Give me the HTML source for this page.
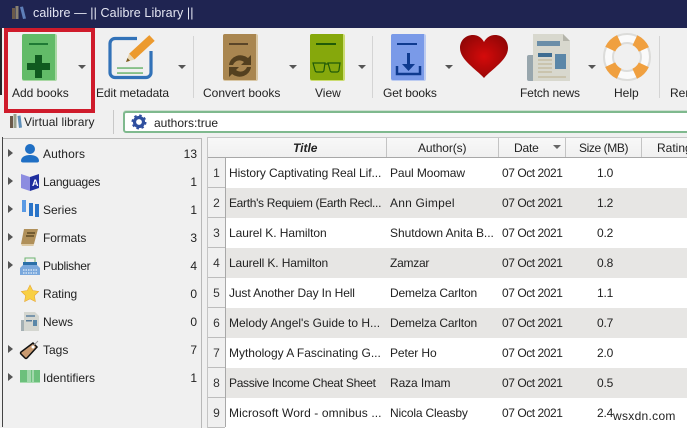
<!DOCTYPE html>
<html>
<head>
<meta charset="utf-8">
<style>
html,body{margin:0;padding:0}
body{width:687px;height:427px;overflow:hidden;position:relative;background:#f0f0f0;font-family:"Liberation Sans",sans-serif;font-size:12px;color:#222}
.a{position:absolute;white-space:nowrap}
.t{position:absolute;white-space:nowrap;line-height:16px}
.d{position:absolute;left:502px;white-space:nowrap;line-height:16px;letter-spacing:-.45px}
.s{position:absolute;left:597px;white-space:nowrap;line-height:16px;letter-spacing:-.2px}
.u{position:absolute;left:229px;white-space:nowrap;line-height:16px;letter-spacing:-.12px}
.w{position:absolute;left:390px;white-space:nowrap;line-height:16px;letter-spacing:-.1px}
.r{position:absolute;left:226px;width:461px;height:30px}
.n{position:absolute;left:208px;width:17px;height:29px;background:#f0f0f0;border-bottom:1px solid #bdbdbd;text-align:center;line-height:30px;color:#333}
.caret{position:absolute;width:0;height:0;border-left:4px solid transparent;border-right:4px solid transparent;border-top:4px solid #555}
.tri{position:absolute;left:8px;width:0;height:0;border-top:4px solid transparent;border-bottom:4px solid transparent;border-left:5px solid #555}
.sep{position:absolute;width:1px;background:#d4d4d4;top:36px;height:62px}
svg{position:absolute;overflow:visible}
</style>
</head>
<body>
<div class="a" style="left:0;top:0;width:687px;height:28px;background:#1f2451"></div>
<svg style="left:12px;top:5px" width="16" height="16" viewBox="0 0 16 16"><rect x="0" y="3" width="3" height="11" fill="#6b5a4a"/><rect x="3.500" y="1" width="3" height="13" fill="#8a8272"/><path d="M8 2l3-.5 3 12-3 .5z" fill="#5f7fb8"/></svg>
<div class="t" style="left:33px;top:5px;color:#e4e6f2;font-size:12.500px;letter-spacing:.1px">calibre — || Calibre Library ||</div>

<div class="a" style="left:0;top:28px;width:2px;height:67px;background:#26262a"></div>
<div class="a" style="left:2px;top:137px;width:1px;height:290px;background:#444"></div>

<svg style="left:22px;top:34px" width="36" height="48" viewBox="0 0 36 48"><rect x="0" y="0" width="35" height="47" rx="2" fill="#a9d8a4"/><path d="M0 2a2 2 0 012-2h31v46H2a2 2 0 01-2-2z" fill="#62bb68"/><rect x="7" y="9" width="19" height="2" fill="#1f7a35"/><path d="M13 21h7v8h8v7h-8v8h-7v-8H5v-7h8z" fill="#0f5a1f"/></svg>
<div class="a" style="left:4px;top:28px;width:83px;height:77px;border:4px solid #cf1b2b"></div>
<div class="caret" style="left:78px;top:65px"></div>
<div class="t" style="left:12px;top:85px">Add books</div>

<svg style="left:108px;top:34px" width="50" height="48" viewBox="0 0 50 48"><path d="M29 4.500H7a5 5 0 00-5 5v29a5 5 0 005 5h31a5 5 0 005-5V17" fill="none" stroke="#3272b8" stroke-width="3.200"/><path d="M21.100 19.700L41.300 1.100l5.400 5.800-20.200 18.600z" fill="#ec9a2e"/><path d="M21.100 19.700L18 28l8.500-2.500z" fill="#e8d5b0"/><path d="M19.500 24L18 28l4-1.200z" fill="#7a5a20"/><rect x="9" y="33.300" width="26" height="1.500" fill="#6db46f"/><rect x="9" y="38.300" width="26" height="1.500" fill="#6db46f"/></svg>
<div class="caret" style="left:178px;top:65px"></div>
<div class="t" style="left:96px;top:85px;letter-spacing:-.08px">Edit metadata</div>
<div class="sep" style="left:193px"></div>

<svg style="left:223px;top:34px" width="36" height="48" viewBox="0 0 36 48"><rect x="0" y="0" width="35" height="47" rx="2" fill="#d8c6a4"/><path d="M0 2a2 2 0 012-2h31v46H2a2 2 0 01-2-2z" fill="#a98650"/><rect x="6" y="9" width="19" height="2" fill="#5a4528"/><path d="M6 31a11.500 11 0 0119-7l3-3v10h-10l3-3a7 7 0 00-11 3zM28 33a11.500 11 0 01-19 7l-3 3V33h10l-3 3a7 7 0 0011-3z" fill="#54401f"/></svg>
<div class="caret" style="left:289px;top:65px"></div>
<div class="t" style="left:203px;top:85px">Convert books</div>

<svg style="left:310px;top:34px" width="36" height="48" viewBox="0 0 36 48"><rect x="0" y="0" width="35" height="47" rx="2" fill="#cbdc70"/><path d="M0 2a2 2 0 012-2h31v46H2a2 2 0 01-2-2z" fill="#86a80c"/><rect x="6" y="9" width="20" height="2" fill="#205a08"/><path d="M3 29h12l-1 7a2 2 0 01-2 2H7a2 2 0 01-2-2zM18 29h12l-1 7a2 2 0 01-2 2h-5a2 2 0 01-2-2zM15 30h3" fill="none" stroke="#205a08" stroke-width="1.200"/></svg>
<div class="caret" style="left:358px;top:65px"></div>
<div class="t" style="left:315px;top:85px">View</div>
<div class="sep" style="left:372px"></div>

<svg style="left:391px;top:34px" width="36" height="48" viewBox="0 0 36 48"><rect x="0" y="0" width="35" height="47" rx="2" fill="#bccbf0"/><path d="M0 2a2 2 0 012-2h31v46H2a2 2 0 01-2-2z" fill="#7a9ae8"/><rect x="6" y="9" width="20" height="2" fill="#0f3a8f"/><path d="M16 19h3v11h5l-6.500 7L11 30h5z" fill="#0f3a8f"/><path d="M6 32v8h23v-8" fill="none" stroke="#0f3a8f" stroke-width="2.500"/></svg>
<div class="caret" style="left:445px;top:65px"></div>
<div class="t" style="left:383px;top:85px;letter-spacing:-.1px">Get books</div>

<svg style="left:460px;top:35px" width="48" height="44" viewBox="0 0 48 44"><defs><radialGradient id="hg" cx=".5" cy=".5" r=".6"><stop offset="0" stop-color="#d50a0a"/><stop offset="1" stop-color="#8f0606"/></radialGradient></defs><path d="M24 43C16 34 0 25 0 13 0 5 6 0 13 0c5 0 9 3 11 7 2-4 6-7 11-7 7 0 13 5 13 13 0 12-16 21-24 30z" fill="url(#hg)"/></svg>

<svg style="left:527px;top:34px" width="44" height="47" viewBox="0 0 44 47"><rect x="0" y="21" width="8" height="26" rx="2" fill="#98a6ad"/><path d="M6 0h30l7 7v40H6z" fill="#d8d8ce"/><path d="M36 0l7 7h-7z" fill="#b4b4aa"/><rect x="10" y="7" width="23" height="5" fill="#6b8ea8"/><rect x="11" y="19" width="14" height="4" fill="#3f6d91"/><rect x="28" y="20" width="11" height="15" fill="#5b87a8"/><path d="M11 26h14M11 30h14M11 34h14M11 38h14M11 43h28" stroke="#c2b89a" stroke-width="1.200"/></svg>
<div class="caret" style="left:588px;top:65px"></div>
<div class="t" style="left:520px;top:85px;letter-spacing:-.15px">Fetch news</div>

<svg style="left:603px;top:33px" width="48" height="48" viewBox="0 0 48 48"><circle cx="24" cy="24" r="18.500" fill="none" stroke="#dcdcda" stroke-width="11"/><circle cx="24" cy="24" r="18.500" fill="none" stroke="#fafafa" stroke-width="7"/><circle cx="24" cy="24" r="18.500" fill="none" stroke="#f0a040" stroke-width="11" stroke-dasharray="13 16.060" stroke-dashoffset="-8.030"/></svg>
<div class="t" style="left:614px;top:85px">Help</div>
<div class="sep" style="left:659px"></div>
<div class="t" style="left:670px;top:85px">Rer</div>

<svg style="left:10px;top:114px" width="12" height="15" viewBox="0 0 12 15"><rect x="0" y="2" width="3" height="12" fill="#6b5a4a"/><rect x="3.500" y="0" width="3" height="14" fill="#9aa08c"/><path d="M7.500 2l3-.5 1.500 12-3 .5z" fill="#5f8fb8"/></svg>
<div class="t" style="left:24px;top:114px;letter-spacing:.05px">Virtual library</div>
<div class="a" style="left:113px;top:110px;width:1px;height:24px;background:#c8c8c8"></div>
<div class="a" style="left:123px;top:111px;width:570px;height:18px;background:#fff;border:2px solid #7fb98e;border-radius:3px;box-shadow:0 -1px 0 #cfe0d2"></div>
<svg style="left:131px;top:114px" width="16" height="16" viewBox="0 0 16 16"><circle cx="8" cy="8" r="4.500" fill="none" stroke="#2f4f9f" stroke-width="3.200"/><circle cx="8" cy="8" r="6.500" fill="none" stroke="#2f4f9f" stroke-width="2" stroke-dasharray="2.500 2.600"/></svg>
<div class="t" style="left:154px;top:115px">authors:true</div>

<div class="a" style="left:3px;top:138px;width:198px;height:289px;border:1px solid #b8b8b8;border-left:0;border-bottom:0"></div>

<div class="tri" style="top:149px"></div><div class="tri" style="top:177px"></div><div class="tri" style="top:205px"></div><div class="tri" style="top:233px"></div><div class="tri" style="top:261px"></div><div class="tri" style="top:345px"></div><div class="tri" style="top:373px"></div>

<svg style="left:20px;top:143px" width="20" height="20" viewBox="0 0 20 20"><circle cx="10" cy="6" r="5" fill="#1f6fc4"/><path d="M1 18c0-4 4-6 9-6s9 2 9 6c0 1-1 1.500-2 1.500H3c-1 0-2-.5-2-1.500z" fill="#1f6fc4"/></svg>
<svg style="left:20px;top:171px" width="20" height="20" viewBox="0 0 20 20"><path d="M1 3l9 3v14l-9-3z" fill="#8c8ce0"/><path d="M10 6l9-3v14l-9 3z" fill="#1f2f9f"/><text x="12" y="15" font-family="Liberation Sans" font-size="9" font-weight="bold" fill="#fff">A</text></svg>
<svg style="left:21px;top:200px" width="20" height="18" viewBox="0 0 20 18"><rect x="1" y="0" width="4" height="12" fill="#5a9ae4"/><rect x="8" y="3" width="4" height="13" fill="#2a74c8"/><rect x="14" y="4" width="4" height="13" fill="#2a74c8"/></svg>
<svg style="left:20px;top:228px" width="20" height="19" viewBox="0 0 20 19"><path d="M4 1h14l-4 15H1z" fill="#b0905a"/><path d="M1 16h13l-.5 2H2z" fill="#dcc9a4"/><path d="M7 5h8M6 8h8" stroke="#5f4a25" stroke-width="1.500"/></svg>
<svg style="left:20px;top:256px" width="20" height="20" viewBox="0 0 20 20"><path d="M5 6V2h10v4" fill="none" stroke="#6db46f" stroke-width="1"/><path d="M3 6h14v3H3z" fill="#2a6fa8"/><path d="M0 12l3-3h14l3 3v7H0z" fill="#7aa8dc"/><path d="M3 14h14M3 17h14" stroke="#fff" stroke-width="1" stroke-dasharray="1.500 1"/></svg>
<svg style="left:21px;top:285px" width="18" height="17" viewBox="0 0 18 17"><path d="M9 0l2.700 5.500 6 .9-4.300 4.200 1 6L9 13.800 3.600 16.600l1-6L.3 6.400l6-.9z" fill="#f8d045" stroke="#e8a838" stroke-width=".6"/></svg>
<svg style="left:21px;top:312px" width="18" height="19" viewBox="0 0 18 19"><rect x="0" y="8" width="4" height="11" fill="#a4b0b4"/><path d="M3 0h11l4 4v15H3z" fill="#d4d6d0"/><rect x="5" y="3" width="9" height="2" fill="#7a96ac"/><rect x="5" y="8" width="6" height="1.500" fill="#5a7c98"/><rect x="12" y="8" width="4" height="6" fill="#5a87a8"/></svg>
<svg style="left:20px;top:340px" width="20" height="20" viewBox="0 0 20 20"><path d="M13 3l4 4L7 18a1.500 1.500 0 01-2 0l-4-4a1.500 1.500 0 010-2z" fill="#c99a70" stroke="#111" stroke-width="1.500"/><circle cx="13" cy="7" r="1.500" fill="#fff"/><path d="M14 5l4-4" stroke="#999"/></svg>
<svg style="left:20px;top:370px" width="20" height="14" viewBox="0 0 20 14"><rect width="20" height="13" fill="#6cc07c"/><path d="M8 0v13M10 0v13M13 0v13" stroke="#d8f0dc" stroke-width="1"/><rect y="12" width="20" height="1" fill="#a8dcb0"/></svg>

<div class="t" style="left:43px;top:146px;letter-spacing:.1px">Authors</div><div class="t" style="right:490px;top:146px">13</div>
<div class="t" style="left:43px;top:174px;letter-spacing:-.25px">Languages</div><div class="t" style="right:490px;top:174px">1</div>
<div class="t" style="left:43px;top:202px">Series</div><div class="t" style="right:490px;top:202px">1</div>
<div class="t" style="left:43px;top:230px;letter-spacing:-.1px">Formats</div><div class="t" style="right:490px;top:230px">3</div>
<div class="t" style="left:43px;top:258px;letter-spacing:-.3px">Publisher</div><div class="t" style="right:490px;top:258px">4</div>
<div class="t" style="left:43px;top:286px;letter-spacing:-.1px">Rating</div><div class="t" style="right:490px;top:286px">0</div>
<div class="t" style="left:43px;top:314px">News</div><div class="t" style="right:490px;top:314px">0</div>
<div class="t" style="left:43px;top:342px">Tags</div><div class="t" style="right:490px;top:342px">7</div>
<div class="t" style="left:43px;top:370px">Identifiers</div><div class="t" style="right:490px;top:370px">1</div>

<div class="a" style="left:207px;top:137px;width:480px;height:290px;background:#fff;border-left:1px solid #c4c4c4;border-top:1px solid #c8c8c8"></div>

<div class="r" style="top:188px;background:#e7e6e4"></div>
<div class="r" style="top:248px;background:#e7e6e4"></div>
<div class="r" style="top:308px;background:#e7e6e4"></div>
<div class="r" style="top:368px;background:#e7e6e4"></div>

<div class="a" style="left:208px;top:138px;width:479px;height:19px;background:linear-gradient(#f8f8f8,#f0f0f0)"></div>
<div class="a" style="left:208px;top:157px;width:479px;height:1px;background:#a8a8a8"></div>
<div class="a" style="left:386px;top:138px;width:1px;height:19px;background:#c4c4c4"></div>
<div class="a" style="left:498px;top:138px;width:1px;height:19px;background:#c4c4c4"></div>
<div class="a" style="left:565px;top:138px;width:1px;height:19px;background:#c4c4c4"></div>
<div class="a" style="left:641px;top:138px;width:1px;height:19px;background:#c4c4c4"></div>
<div class="t" style="left:293px;top:140px"><b><i>Title</i></b></div>
<div class="t" style="left:418px;top:140px;letter-spacing:-.1px">Author(s)</div>
<div class="t" style="left:514px;top:140px;letter-spacing:-.2px">Date</div>
<div class="caret" style="left:553px;top:145px;border-top-color:#666"></div>
<div class="t" style="left:579px;top:140px;letter-spacing:-.4px">Size (MB)</div>
<div class="t" style="left:657px;top:140px">Rating</div>

<div class="n" style="top:158px">1</div>
<div class="n" style="top:188px">2</div>
<div class="n" style="top:218px">3</div>
<div class="n" style="top:248px">4</div>
<div class="n" style="top:278px">5</div>
<div class="n" style="top:308px">6</div>
<div class="n" style="top:338px">7</div>
<div class="n" style="top:368px">8</div>
<div class="n" style="top:398px">9</div>
<div class="a" style="left:225px;top:158px;width:1px;height:269px;background:#a8a8a8"></div>

<div class="u" style="top:165px;letter-spacing:-.08px">History Captivating Real Lif...</div><div class="w" style="top:165px">Paul Moomaw</div><div class="d" style="top:165px">07 Oct 2021</div><div class="s" style="top:165px">1.0</div>
<div class="u" style="top:195px;letter-spacing:-.32px">Earth's Requiem (Earth Recl...</div><div class="w" style="top:195px;letter-spacing:.2px">Ann Gimpel</div><div class="d" style="top:195px">07 Oct 2021</div><div class="s" style="top:195px">1.2</div>
<div class="u" style="top:225px;letter-spacing:-.06px">Laurel K. Hamilton</div><div class="w" style="top:225px;letter-spacing:-.05px">Shutdown Anita B...</div><div class="d" style="top:225px">07 Oct 2021</div><div class="s" style="top:225px">0.2</div>
<div class="u" style="top:255px">Laurell K. Hamilton</div><div class="w" style="top:255px;letter-spacing:-.25px">Zamzar</div><div class="d" style="top:255px">07 Oct 2021</div><div class="s" style="top:255px">0.8</div>
<div class="u" style="top:285px">Just Another Day In Hell</div><div class="w" style="top:285px;letter-spacing:-.16px">Demelza Carlton</div><div class="d" style="top:285px">07 Oct 2021</div><div class="s" style="top:285px">1.1</div>
<div class="u" style="top:315px;letter-spacing:0">Melody Angel's Guide to H...</div><div class="w" style="top:315px;letter-spacing:-.16px">Demelza Carlton</div><div class="d" style="top:315px">07 Oct 2021</div><div class="s" style="top:315px">0.7</div>
<div class="u" style="top:345px;letter-spacing:-.01px">Mythology A Fascinating G...</div><div class="w" style="top:345px">Peter Ho</div><div class="d" style="top:345px">07 Oct 2021</div><div class="s" style="top:345px">2.0</div>
<div class="u" style="top:375px;letter-spacing:-.31px">Passive Income Cheat Sheet</div><div class="w" style="top:375px">Raza Imam</div><div class="d" style="top:375px">07 Oct 2021</div><div class="s" style="top:375px">0.5</div>
<div class="u" style="top:405px;letter-spacing:.1px">Microsoft Word - omnibus ...</div><div class="w" style="top:405px;letter-spacing:-.17px">Nicola Cleasby</div><div class="d" style="top:405px">07 Oct 2021</div><div class="s" style="top:405px">2.4</div>
<div class="t" style="left:613px;top:408px;color:#222;background:#fff;letter-spacing:.3px">wsxdn.com</div>
</body>
</html>
